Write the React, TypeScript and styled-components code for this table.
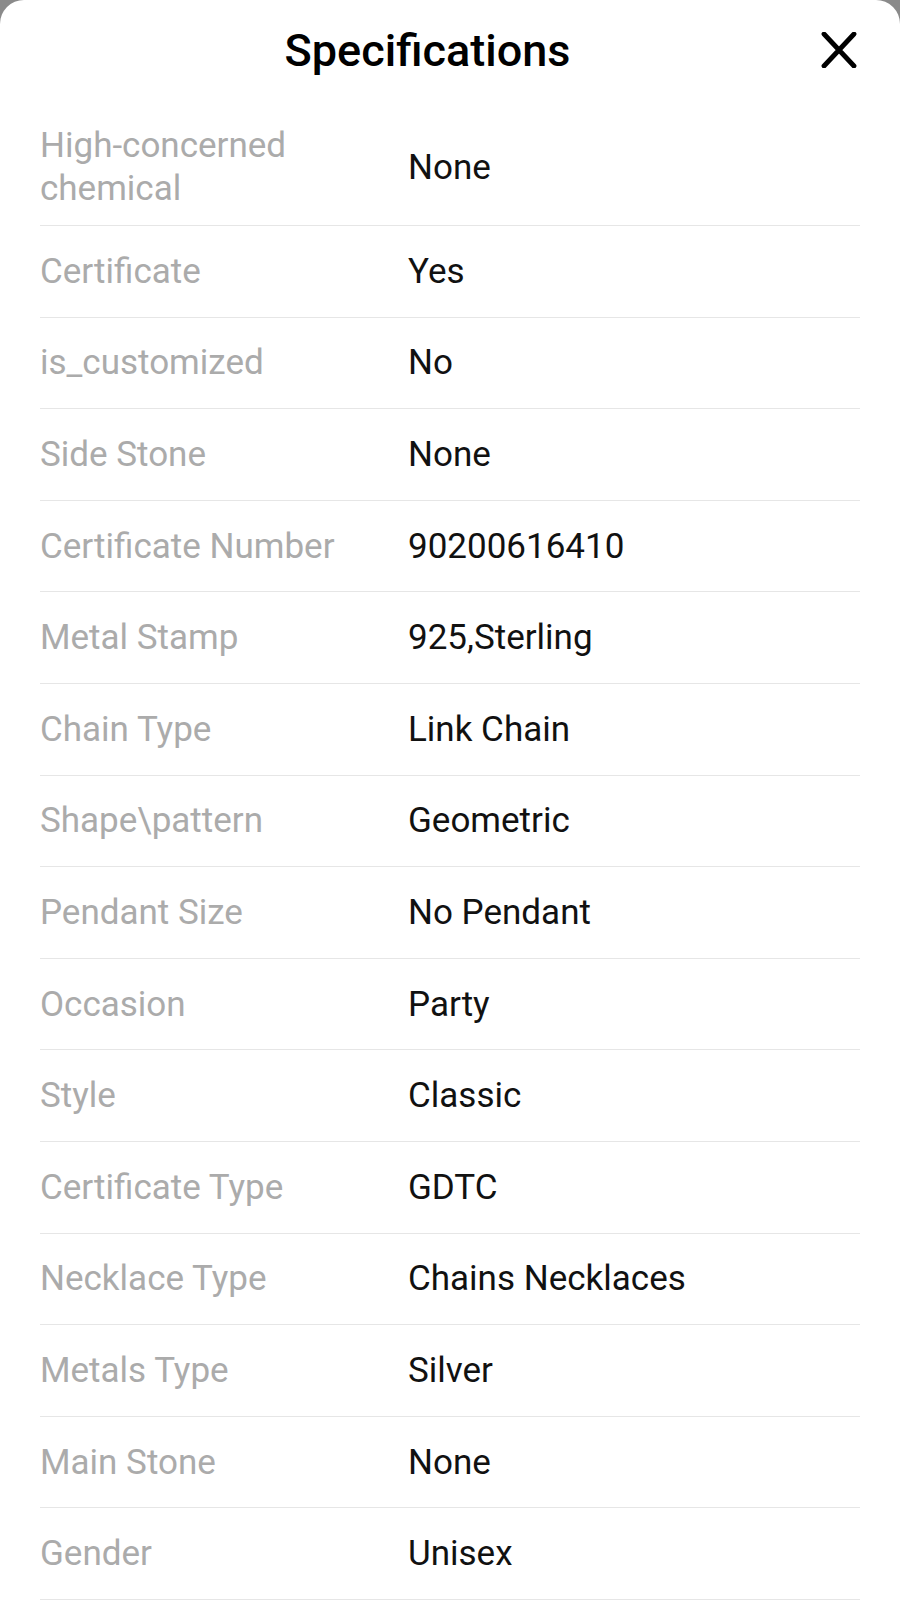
import React from 'react';
import styled, { createGlobalStyle } from 'styled-components';

const GlobalStyle = createGlobalStyle`
  html, body {
    margin: 0;
    padding: 0;
    background: #8a8a8a;
  }
  body {
    font-family: Roboto, "Noto Sans", Arial, sans-serif;
  }
`;

interface Spec {
  label: string,
  value: string,
}

const specs: Spec[] = [
  { label: 'High-concerned chemical', value: 'None' },
  { label: 'Certificate', value: 'Yes' },
  { label: 'is_customized', value: 'No' },
  { label: 'Side Stone', value: 'None' },
  { label: 'Certificate Number', value: '90200616410' },
  { label: 'Metal Stamp', value: '925,Sterling' },
  { label: 'Chain Type', value: 'Link Chain' },
  { label: 'Shape\\pattern', value: 'Geometric' },
  { label: 'Pendant Size', value: 'No Pendant' },
  { label: 'Occasion', value: 'Party' },
  { label: 'Style', value: 'Classic' },
  { label: 'Certificate Type', value: 'GDTC' },
  { label: 'Necklace Type', value: 'Chains Necklaces' },
  { label: 'Metals Type', value: 'Silver' },
  { label: 'Main Stone', value: 'None' },
  { label: 'Gender', value: 'Unisex' },
];

const Sheet = styled.section`
  background: #fff;
  border-radius: 24px 24px 0 0;
  min-height: 1600px;
  box-sizing: border-box;
  padding: 0 40px;
`;

const Header = styled.header`
  display: flex;
  align-items: center;
  height: 60px;
  padding-top: 20px;
`;

const Title = styled.h1`
  flex: 1;
  margin: 0;
  text-align: center;
  font-size: 45px;
  font-weight: 500;
  color: #000;
`;

const CloseButton = styled.button`
  flex: none;
  width: 45px;
  height: 40px;
  padding: 0;
  border: 0;
  background: none;
  display: flex;
  align-items: center;
  justify-content: flex-end;
  cursor: pointer;
`;

const CloseIcon = styled.svg`
  margin-right: 3px;
`;

const List = styled.div`
  margin-top: 29px;
`;

const Row = styled.div`
  display: grid;
  grid-template-columns: 368px 1fr;
  align-items: center;
  min-height: 91.6px;
  padding: 15px 0;
  box-sizing: border-box;
  border-bottom: 1px solid #e6e6e6;
  font-size: 35px;
  line-height: 43px;
`;

const Label = styled.div`
  color: #ababab;
`;

const Value = styled.div`
  color: #111;
`;

const App: React.FC = () => (
  <>
    <GlobalStyle />
    <Sheet>
      <Header>
        <Title>Specifications</Title>
        <CloseButton type="button" title="Close">
          <CloseIcon width="36" height="36" viewBox="0 0 36 36">
            <path d="M3 2 L33 34 M33 2 L3 34" stroke="#000" strokeWidth="4.8" strokeLinecap="round" fill="none" />
          </CloseIcon>
        </CloseButton>
      </Header>
      <List>
        {specs.map(({ label, value }) => (
          <Row key={label}>
            <Label>{label}</Label>
            <Value>{value}</Value>
          </Row>
        ))}
      </List>
    </Sheet>
  </>
);

export default App;
